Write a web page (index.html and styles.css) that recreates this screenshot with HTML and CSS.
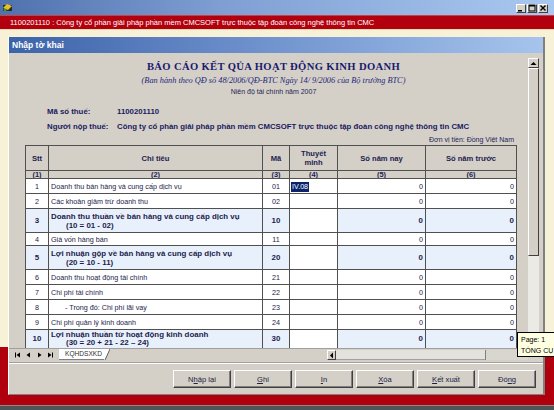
FILE: index.html
```html
<!DOCTYPE html>
<html>
<head>
<meta charset="utf-8">
<link rel="stylesheet" href="styles.css">
</head>
<body>
<div class="screen">
  <div class="titlebar">
    <svg class="appicon" width="11" height="11" viewBox="0 0 11 11"><rect x="1" y="3" width="9" height="6" fill="#2b2b2b"/><path d="M1 6 L5 2 L10 4 L6 8 Z" fill="#e8c020"/><circle cx="3" cy="8" r="1.5" fill="#30a030"/></svg>
    <div class="winbtns">
      <span class="wb"><svg width="8" height="8" viewBox="0 0 8 8"><rect x="1" y="6" width="4" height="1.5" fill="#000"/></svg></span>
      <span class="wb"><svg width="8" height="8" viewBox="0 0 8 8"><rect x="1" y="1" width="6" height="6" fill="none" stroke="#000" stroke-width="1"/><rect x="1" y="1" width="6" height="1.5" fill="#000"/></svg></span>
      <span class="wb"><svg width="8" height="8" viewBox="0 0 8 8"><path d="M1.5 1.5 L6.5 6.5 M6.5 1.5 L1.5 6.5" stroke="#000" stroke-width="1.4"/></svg></span>
    </div>
  </div>
  <div class="redbar">1100201110 : Công ty cổ phần giải pháp phần mềm CMCSOFT trực thuộc tập đoàn công nghệ thông tin CMC</div>
  <div class="mdi">
    <div class="backwin"></div>
    <div class="child">
      <div class="childcap">Nhập tờ khai</div>
      <div class="childbody">
        <div class="sheetrow">
          <div class="sheet">
            <div class="rtitle">BÁO CÁO KẾT QỦA HOẠT ĐỘNG KINH DOANH</div>
            <div class="rsub">(Ban hành theo QĐ số 48/2006/QĐ-BTC Ngày 14/ 9/2006 của Bộ trưởng BTC)</div>
            <div class="rnien">Niên độ tài chính năm 2007</div>
            <div class="info first"><span class="lbl">Mã số thuế:</span><span class="val">1100201110</span></div>
            <div class="info"><span class="lbl">Người nộp thuế:</span><span class="val">Công ty cổ phần giải pháp phần mềm CMCSOFT trực thuộc tập đoàn công nghệ thông tin CMC</span></div>
            <div class="unit">Đơn vị tiền: Đồng Việt Nam</div>
            <table class="grid">
              <colgroup><col class="c1"><col class="c2"><col class="c3"><col class="c4"><col class="c5"><col class="c6"></colgroup>
              <tr class="hd"><th>Stt</th><th>Chỉ tiêu</th><th>Mã</th><th>Thuyết<br>minh</th><th>Số năm nay</th><th>Số năm trước</th></tr>
              <tr class="sub"><th>(1)</th><th>(2)</th><th>(3)</th><th>(4)</th><th>(5)</th><th>(6)</th></tr>
              <tr class="r"><td class="ct">1</td><td>Doanh thu bán hàng và cung cấp dịch vụ</td><td class="ct">01</td><td><span class="sel">IV.08</span></td><td class="num">0</td><td class="num">0</td></tr>
              <tr class="r"><td class="ct">2</td><td>Các khoản giảm trừ doanh thu</td><td class="ct">02</td><td></td><td class="num">0</td><td class="num">0</td></tr>
              <tr class="b"><td class="ct">3</td><td>Doanh thu thuần về bán hàng và cung cấp dịch vụ<br><span class="ind">(10 = 01 - 02)</span></td><td class="ct">10</td><td class="w"></td><td class="num">0</td><td class="num">0</td></tr>
              <tr class="r r4"><td class="ct">4</td><td>Giá vốn hàng bán</td><td class="ct">11</td><td></td><td class="num">0</td><td class="num">0</td></tr>
              <tr class="b"><td class="ct">5</td><td>Lợi nhuận gộp về bán hàng và cung cấp dịch vụ<br><span class="ind">(20 = 10 - 11)</span></td><td class="ct">20</td><td class="w"></td><td class="num">0</td><td class="num">0</td></tr>
              <tr class="r"><td class="ct">6</td><td>Doanh thu hoạt động tài chính</td><td class="ct">21</td><td></td><td class="num">0</td><td class="num">0</td></tr>
              <tr class="r"><td class="ct">7</td><td>Chi phí tài chính</td><td class="ct">22</td><td></td><td class="num">0</td><td class="num">0</td></tr>
              <tr class="r"><td class="ct">8</td><td><span class="ind8">- Trong đó: Chi phí lãi vay</span></td><td class="ct">23</td><td></td><td class="num">0</td><td class="num">0</td></tr>
              <tr class="r"><td class="ct">9</td><td>Chi phí quản lý kinh doanh</td><td class="ct">24</td><td></td><td class="num">0</td><td class="num">0</td></tr>
              <tr class="b last"><td class="ct">10</td><td>Lợi nhuận thuần từ hoạt động kinh doanh<br><span class="ind">(30 = 20 + 21 - 22 – 24)</span></td><td class="ct">30</td><td class="w"></td><td class="num">0</td><td class="num">0</td></tr>
            </table>
          </div>
          <div class="vscroll">
            <div class="sbtn"><svg width="7" height="5" viewBox="0 0 7 5"><path d="M0.5 4 L3.5 1 L6.5 4 Z" fill="#000"/></svg></div>
            <div class="vthumb"></div>
            <div class="vtrack"></div>
          </div>
        </div>
        <div class="tabbar">
          <div class="navs">
            <span class="nv"><svg width="7" height="6" viewBox="0 0 7 6"><rect x="1" y="0.5" width="1" height="5" fill="#000"/><path d="M6 0.5 L2.5 3 L6 5.5 Z" fill="#000"/></svg></span>
            <span class="nv"><svg width="7" height="6" viewBox="0 0 7 6"><path d="M5 0.5 L1.5 3 L5 5.5 Z" fill="#000"/></svg></span>
            <span class="nv"><svg width="7" height="6" viewBox="0 0 7 6"><path d="M2 0.5 L5.5 3 L2 5.5 Z" fill="#000"/></svg></span>
            <span class="nv"><svg width="7" height="6" viewBox="0 0 7 6"><path d="M1 0.5 L4.5 3 L1 5.5 Z" fill="#000"/><rect x="5" y="0.5" width="1" height="5" fill="#000"/></svg></span>
          </div>
          <div class="tab">KQHDSXKD</div>
          <svg class="tabedge" width="6" height="11" viewBox="0 0 6 11"><path d="M0 0 L6 0 L1 11 L0 11 Z" fill="#fff"/><path d="M6 0 L1 11" stroke="#606060" stroke-width="1"/></svg>
          <div class="spacer"></div>
          <div class="hscroll">
            <div class="hbtn"><svg width="5" height="7" viewBox="0 0 5 7"><path d="M4 0.5 L1 3.5 L4 6.5 Z" fill="#000"/></svg></div>
            <div class="hthumb"></div>
            <div class="htrack"></div>
          </div>
        </div>
        <div class="btnbar">
          <button class="btn">N<u>h</u>ập lại</button>
          <button class="btn"><u>G</u>hi</button>
          <button class="btn"><u>I</u>n</button>
          <button class="btn"><u>X</u>óa</button>
          <button class="btn"><u>K</u>ết xuất</button>
          <button class="btn">Đó<u>n</u>g</button>
        </div>
      </div>
    </div>
    <div class="tip"><div>Page: 1</div><div>TỔNG CỤ</div></div>
  </div>
  <div class="taskbar"></div>
</div>
</body>
</html>
```
FILE: styles.css
```css
* { box-sizing: border-box; }
html, body { margin: 0; padding: 0; }
body { font-family: "Liberation Sans", Arial, sans-serif; background: #b0000e; }
.screen { width: 554px; height: 410px; overflow: hidden; display: flex; flex-direction: column; background: #b0000e; }

.titlebar { height: 15px; flex: none; display: flex; align-items: center; justify-content: space-between; padding: 0 6px 0 2px;
  background: linear-gradient(to right, #4f71ad 0%, #7f9fd3 40%, #a9c8f0 100%); }
.appicon { display: block; }
.winbtns { display: flex; gap: 1px; margin-top: 1px; }
.wb { width: 10px; height: 9px; background: #d4d0c8; border: 1px solid; border-color: #fff #404040 #404040 #fff; display: flex; align-items: center; justify-content: center; }
.wb svg { display: block; }

.redbar { height: 14px; flex: none; background: #b3000e; border-top: 1px solid #c8404a; color: #fff; font-size: 7.5px; line-height: 13px; padding-left: 10px; white-space: nowrap; }

.mdi { flex: 1; position: relative; background: #b0000e; }
.backwin { position: absolute; left: 0; top: 0; width: 554px; height: 318px; background: #f6f1d7; border-top: 1px solid #e8dcb0; }
.child { position: absolute; left: 8px; top: 8px; width: 537px; height: 358px; background: #d4d0c8; display: flex; flex-direction: column;
  border-left: 1px solid #fff; border-right: 2px solid #808080; border-bottom: 1px solid #808080; }
.childcap { height: 16px; flex: none; color: #fff; font-weight: bold; font-size: 8.5px; line-height: 16px; padding-left: 3px;
  background: linear-gradient(to right, #3c62a8 0%, #6d90cc 45%, #a6c4ec 100%); }
.childbody { flex: 1; display: flex; flex-direction: column; }

.sheetrow { height: 295px; flex: none; display: flex; }
.sheet { flex: 1; overflow: hidden; padding: 5px 0 0 16px; color: #1d1d55; }
.rtitle { height: 18px; line-height: 18px; text-align: center; padding-right: 6px; font-family: "Liberation Serif", "Times New Roman", serif; font-weight: bold; font-size: 10.6px; color: #1a1a6e; letter-spacing: 0.35px; }
.rsub { height: 10px; line-height: 10px; text-align: center; padding-right: 6px; font-family: "Liberation Serif", "Times New Roman", serif; font-style: italic; font-size: 8.3px; color: #26267a; }
.rnien { height: 11px; line-height: 11px; text-align: center; padding-right: 6px; font-size: 7px; color: #1d1d55; }
.info { height: 15px; line-height: 15px; display: flex; font-weight: bold; font-size: 7.8px; color: #1a1a60; padding-left: 22px; }
.info.first { margin-top: 7px; }
.lbl { width: 70px; flex: none; }
.val { white-space: nowrap; }
.unit { height: 11px; line-height: 11px; text-align: right; width: 491px; font-size: 7px; color: #1d1d55; padding-right: 2px; }

.grid { border-collapse: collapse; table-layout: fixed; width: 491px; font-size: 7.2px; color: #1c1c4c; }
.c1 { width: 23px; } .c2 { width: 214px; } .c3 { width: 27px; } .c4 { width: 48px; } .c5 { width: 88px; } .c6 { width: 91px; }
.grid th, .grid td { border: 1px solid #505050; padding: 0 2px; white-space: nowrap; overflow: hidden; }
.grid th { background: #d4d0c8; font-weight: bold; color: #1d1d50; text-align: center; }
.hd th { height: 25px; line-height: 9px; font-size: 7.6px; }
.sub th { height: 8px; line-height: 7px; font-size: 7.4px; padding: 0; }
.r td { height: 15px; line-height: 13px; background: #fff; }
.r4 td { height: 13px; line-height: 11px; }
.b td { height: 24px; line-height: 9px; background: #e8f1fb; font-weight: bold; font-size: 7.9px; }
.b.last td { line-height: 8px; vertical-align: top; padding-top: 1px; }
.b.last td.ct, .b.last td.num { line-height: 18px; padding-top: 0; }
.b td.w { background: #fff; }
.ct { text-align: center; }
.num { text-align: right; }
.ind { padding-left: 15px; }
.ind8 { padding-left: 14px; }
.sel { display: inline-block; background: #0a246a; color: #fff; padding: 0 1px; line-height: 10px; margin-left: -1px; }

.vscroll { width: 11px; flex: none; margin: 5px 4px 3px 0; display: flex; flex-direction: column; background: #e6e3dd; }
.sbtn { height: 10px; flex: none; background: #d4d0c8; border: 1px solid; border-color: #fff #404040 #404040 #fff; display: flex; align-items: center; justify-content: center; }
.vthumb { height: 188px; flex: none; background: #d4d0c8; border: 1px solid; border-color: #fff #404040 #404040 #fff; }
.vtrack { flex: 1; background: #eceae5; }

.tabbar { height: 12px; flex: none; display: flex; align-items: flex-start; padding-left: 3px; background: #d4d0c8; border-top: 1px solid #a0a0a0; }
.navs { display: flex; padding-top: 1px; }
.nv { width: 11px; height: 10px; display: flex; align-items: center; justify-content: center; }
.tab { height: 11px; margin-left: 3px; background: #fff; color: #303030; font-size: 6.6px; line-height: 10px; padding: 0 2px 0 6px; white-space: nowrap; border-bottom: 1px solid #808080; }
.tabedge { display: block; flex: none; }
.spacer { flex: 1; }
.hscroll { width: 201px; margin-right: 15px; display: flex; margin-top: 1px; height: 10px; }
.hbtn { width: 9px; background: #d4d0c8; border: 1px solid; border-color: #fff #404040 #404040 #fff; display: flex; align-items: center; justify-content: center; }
.hthumb { width: 149px; background: #e4e2dc; border-bottom: 1px solid #a0a0a0; }
.htrack { flex: 1; background: #d9d6d0; border-left: 1px solid #808080; }

.btnbar { flex: 1; display: flex; justify-content: flex-end; align-items: flex-start; gap: 3px; padding: 7px 7px 0 0; margin-top: 2px;
  border-top: 1px solid #a0a0a0; box-shadow: inset 0 1px 0 #fff; }
.btn { width: 58px; height: 18px; padding: 0; margin: 0; background: #d4d0c8; font-family: "Liberation Sans", Arial, sans-serif; font-size: 7.6px; color: #202040;
  border: 1px solid; border-color: #fff #404040 #404040 #fff; box-shadow: inset -1px -1px 0 #808080; }

.tip { position: absolute; left: 517px; top: 303px; width: 40px; height: 25px; background: #ffffe1; border: 1px solid #000; border-right: 0; font-size: 7px; color: #000; line-height: 11px; padding: 1px 0 0 3px; white-space: nowrap; }

.taskbar { height: 5px; flex: none; background: #505458; border-top: 1px solid #888; }
```
